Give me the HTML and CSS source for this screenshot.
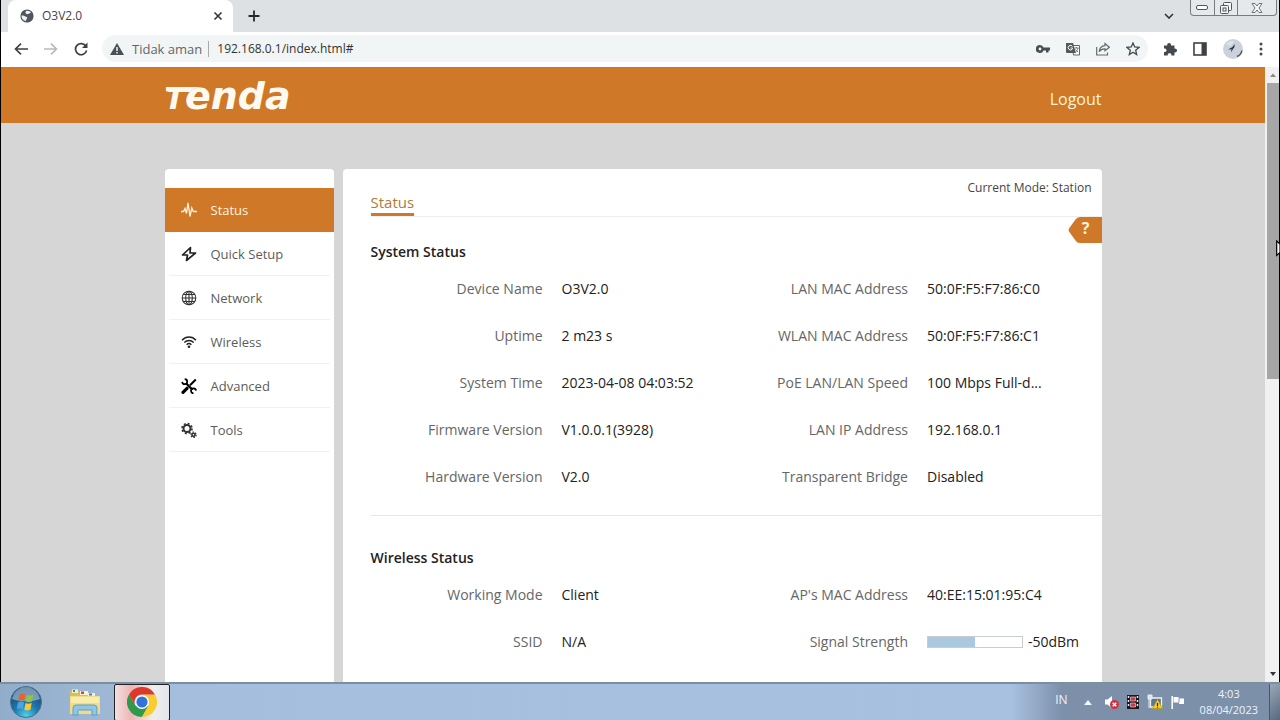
FILE: index.html
```
<!DOCTYPE html>
<html lang="en">
<head>
<meta charset="utf-8">
<title>O3V2.0</title>
<link rel="stylesheet" href="styles.css">
</head>
<body>
<div class="desktop">
  <div class="browser">
    <div class="tabstrip">
      <div class="tab">
        <svg class="tab-globe" viewBox="0 0 14 14" width="14" height="14"><circle cx="7" cy="7" r="6.6" fill="#50565c"/><path d="M1.500 6.500c2-.3 3 .6 4.500 1.200C7.800 8 7.500 9.500 6.500 10c-.4 1-.3 1.700-1 2C3 11.300 1.200 9 1.500 6.500zM6 2c2-.6 4 .3 5 1.500-.6.8-2 .6-2.600 1.600C7 5.500 5.600 4.800 5.500 3.600z" fill="#eef1f3"/></svg>
        <span class="tab-title">O3V2.0</span>
        <button class="icon-btn" aria-label="Close tab"><svg viewBox="0 0 10 10" width="10" height="10"><path d="M1.500 1.500l7 7m0-7l-7 7" stroke="#333" stroke-width="1.600"/></svg></button>
      </div>
      <button class="icon-btn new-tab" aria-label="New tab"><svg viewBox="0 0 12 12" width="12" height="12"><path d="M6 .5v11M.5 6h11" stroke="#26282b" stroke-width="1.800"/></svg></button>
      <button class="icon-btn tab-search" aria-label="Search tabs"><svg viewBox="0 0 10 6" width="10" height="6"><path d="M1 1l4 4 4-4" fill="none" stroke="#333" stroke-width="1.600"/></svg></button>
      <div class="window-buttons">
        <button class="min" aria-label="Minimize"><svg viewBox="0 0 12 5" width="12" height="5"><rect x=".5" y=".5" width="11" height="4" rx="1.500" fill="#fff" stroke="#555"/></svg></button>
        <button class="max" aria-label="Restore"><svg viewBox="0 0 12 12" width="12" height="12"><g fill="#f4f6f8" stroke="#50555a"><rect x="3.500" y=".5" width="8" height="8" rx="1"/><rect x=".5" y="3.500" width="8" height="8" rx="1"/><rect x="3" y="6" width="3" height="3"/></g></svg></button>
        <button class="close" aria-label="Close"><svg viewBox="0 0 12 10" width="12" height="10"><path d="M1 .5h3l2 2.500 2-2.500h3L8 5l3 4.500H8L6 7 4 9.500H1L4 5z" fill="#f4f6f8" stroke="#666" stroke-width=".9"/></svg></button>
      </div>
    </div>

    <div class="toolbar">
      <div class="nav-buttons">
        <button class="icon-btn" aria-label="Back"><svg viewBox="0 0 14 12" width="14" height="12"><path d="M14 6H1.500M7 .7L1.500 6 7 11.300" fill="none" stroke="#3c4043" stroke-width="1.600"/></svg></button>
        <button class="icon-btn" aria-label="Forward"><svg viewBox="0 0 14 12" width="14" height="12"><path d="M0 6h12.500M7 .7L12.500 6 7 11.300" fill="none" stroke="#b6b9bc" stroke-width="1.600"/></svg></button>
        <button class="icon-btn" aria-label="Reload"><svg viewBox="0 0 14 14" width="14" height="14"><path d="M12 4.300A5.600 5.600 0 1 0 12.600 8.500" fill="none" stroke="#3c4043" stroke-width="1.700"/><path d="M13.500 .5v5.500H8z" fill="#3c4043"/></svg></button>
      </div>
      <div class="omnibox">
        <svg viewBox="0 0 14 12" width="14" height="12"><path d="M7 0l7 12H0z" fill="#4b4f53"/><path d="M7 4v4M7 9v1.500" stroke="#fff" stroke-width="1.400"/></svg>
        <span class="insecure">Tidak aman</span>
        <input class="address" aria-label="Address" value="192.168.0.1/index.html#">
        <button class="icon-btn" aria-label="Passwords"><svg viewBox="0 0 14 10" width="14" height="10"><path fill-rule="evenodd" d="M4 1a4 4 0 1 0 3.500 5.500H10v2h2.500v-2H14V3.500H7.500A4 4 0 0 0 4 1zm0 2.600a1.400 1.400 0 1 1 0 2.800 1.400 1.400 0 0 1 0-2.800z" fill="#494d51"/></svg></button>
        <button class="icon-btn" aria-label="Translate"><svg viewBox="0 0 14 14" width="14" height="14"><path d="M6 3.500h7.500v9.500H7.500z" fill="#fff" stroke="#666"/><path d="M0 1h7l3 10H1a1 1 0 0 1-1-1z" fill="#55595d"/><path d="M6.500 4.500A2.300 2.300 0 1 0 6.500 6.800V6H4.500" fill="none" stroke="#fff" stroke-width="1"/><path d="M8.500 6h4M10.500 5v1M12 6c-.3 2-1.500 3-2.500 4M9.500 7.500l2.500 2.500" fill="none" stroke="#777"/></svg></button>
        <button class="icon-btn" aria-label="Share"><svg viewBox="0 0 14 14" width="14" height="14"><path d="M.7 5v8h10.800v-2.500" fill="none" stroke="#676b6f" stroke-width="1.200"/><path d="M9 1.500l4.300 3.700L9 8.800V6.800C6.500 6.700 4.500 7.600 3.200 9.800 3.500 6 5.700 3.900 9 3.600z" fill="none" stroke="#676b6f" stroke-width="1.200"/></svg></button>
        <button class="icon-btn" aria-label="Bookmark"><svg viewBox="0 0 14 14" width="14" height="14"><path d="M7 1l1.700 4 4.300.4-3.300 2.900 1 4.300L7 10.300l-3.700 2.300 1-4.300L1 5.400 5.300 5z" fill="none" stroke="#44484c" stroke-width="1.300"/></svg></button>
      </div>
      <div class="tool-icons">
        <button class="icon-btn" aria-label="Extensions"><svg viewBox="0 0 14 14" width="14" height="14"><path d="M1 3.500h3.300a1.900 1.900 0 1 1 3.600 0H11.500v3.200a1.900 1.900 0 1 1 0 3.600V13.500H8.300a1.800 1.800 0 1 0-3.500 0H1v-3.600a1.800 1.800 0 1 0 0-3.300z" fill="#45494d"/></svg></button>
        <button class="icon-btn" aria-label="Side panel"><svg viewBox="0 0 14 14" width="14" height="14"><rect x="1" y="1" width="12" height="12" fill="#fff" stroke="#3e4246" stroke-width="1.600"/><path d="M8.500 1H13v12H8.500z" fill="#3e4246"/></svg></button>
        <button class="icon-btn" aria-label="Profile"><svg viewBox="0 0 20 20" width="20" height="20"><circle cx="10" cy="10" r="10" fill="#ccd1dd"/><path d="M3 5a9 9 0 0 1 8-3l-3 5z" fill="#dfe3ea"/><path d="M11.500 5L9.500 8 5 10.500l3.500-.2L8 13.500l2-3.500 1.500-2z" fill="#2c3245"/><path d="M14 17.500c3-1.300 4.500-3.500 4.800-6" fill="none" stroke="#50566a" stroke-width="1.400"/></svg></button>
        <button class="icon-btn" aria-label="Menu"><svg viewBox="0 0 4 14" width="4" height="14"><g fill="#45494d"><circle cx="2" cy="2" r="1.500"/><circle cx="2" cy="7" r="1.500"/><circle cx="2" cy="12" r="1.500"/></g></svg></button>
      </div>
    </div>

    <div class="viewport">
      <div class="page">
        <header class="site-header">
          <div class="container header-row">
            <div class="logo"><span class="logo-cap">T</span>enda<svg class="logo-bar" viewBox="0 0 36 5" width="36" height="5"><path d="M1 0H36Q28 1 25 5H4Q0 4 1 0z" fill="#fffaf0"/></svg></div>
            <a class="logout" href="#">Logout</a>
          </div>
        </header>
        <div class="container layout">
          <nav class="sidebar">
            <a class="nav-item active" href="#"><svg viewBox="0 0 16 16" width="16" height="16"><path d="M0 9.500h2.500L4 6.500l1.500 5L7 .8l2 13.700L10.800 6l1.500 3.500H16" fill="none" stroke="#fff1dc" stroke-width="1.300"/></svg>Status</a>
            <a class="nav-item" href="#"><svg viewBox="0 0 16 16" width="16" height="16"><path d="M9.500 1.500L1.500 9h5l-1 5.500L14.500 7H9z" fill="none" stroke="#222" stroke-width="1.700" stroke-linejoin="round"/></svg>Quick Setup</a>
            <a class="nav-item" href="#"><svg viewBox="0 0 16 16" width="16" height="16"><g fill="none" stroke="#333" stroke-width="1.100"><circle cx="8" cy="8" r="6.800"/><ellipse cx="8" cy="8" rx="3.300" ry="6.800"/><path d="M8 1v14M1 8h14M2.200 4.500h11.600M2.200 11.500h11.600"/></g></svg>Network</a>
            <a class="nav-item" href="#"><svg viewBox="0 0 16 16" width="16" height="16"><g fill="none" stroke="#222" stroke-width="1.400"><path d="M1 6.200C5 2 11 2 15 6.200M3.300 8.500c2.700-2.700 6.700-2.700 9.400 0M5.600 10.700c1.500-1.400 3.300-1.400 4.800 0"/></g><circle cx="8" cy="12.700" r="1.300" fill="#222"/></svg>Wireless</a>
            <a class="nav-item" href="#"><svg viewBox="0 0 16 16" width="16" height="16"><g fill="none" stroke="#000"><path d="M14.800 1.500L9 7.300" stroke-width="2"/><path d="M6 10.300L2 14.300" stroke-width="3.200" stroke-linecap="round"/><path d="M5 5.300l6.500 6.500" stroke-width="2.300"/><path d="M3.700 1.200A2.500 2.500 0 1 1 1.200 3.900M12.500 15.300A2.500 2.500 0 1 1 15 12.600" stroke-width="1.700"/></g></svg>Advanced</a>
            <a class="nav-item" href="#"><svg viewBox="0 0 16 16" width="16" height="16"><g fill="none" stroke="#333"><circle cx="6" cy="6.500" r="3.500" stroke-width="2"/><circle cx="6" cy="6.500" r="5" stroke-width="1.600" stroke-dasharray="2 1.930"/><circle cx="12.500" cy="12.800" r="1.600" stroke-width="1.600"/><circle cx="12.500" cy="12.800" r="2.700" stroke-width="1.200" stroke-dasharray="1.400 1.430"/></g></svg>Tools</a>
          </nav>
          <main class="panel">
            <div class="panel-head">
              <h1 class="panel-tab">Status</h1>
              <div class="mode">Current Mode: Station</div>
              <button class="help" aria-label="Help"><svg class="help-shape" viewBox="0 0 34 26" width="34" height="26"><path d="M34 0H12Q9 0 7.500 2.500L1 11.500Q0 13 1 14.500L7.500 23.500Q9 26 12 26H34z" fill="#ce7828"/></svg><span class="help-mark">?</span></button>
            </div>
            <section class="group">
              <h2>System Status</h2>
              <div class="columns">
                <dl>
                  <div><dt>Device Name</dt><dd>O3V2.0</dd></div>
                  <div><dt>Uptime</dt><dd>2 m23 s</dd></div>
                  <div><dt>System Time</dt><dd>2023-04-08 04:03:52</dd></div>
                  <div><dt>Firmware Version</dt><dd>V1.0.0.1(3928)</dd></div>
                  <div><dt>Hardware Version</dt><dd>V2.0</dd></div>
                </dl>
                <dl>
                  <div><dt>LAN MAC Address</dt><dd>50:0F:F5:F7:86:C0</dd></div>
                  <div><dt>WLAN MAC Address</dt><dd>50:0F:F5:F7:86:C1</dd></div>
                  <div><dt>PoE LAN/LAN Speed</dt><dd>100 Mbps Full-d...</dd></div>
                  <div><dt>LAN IP Address</dt><dd>192.168.0.1</dd></div>
                  <div><dt>Transparent Bridge</dt><dd>Disabled</dd></div>
                </dl>
              </div>
            </section>
            <section class="group">
              <h2>Wireless Status</h2>
              <div class="columns">
                <dl>
                  <div><dt>Working Mode</dt><dd>Client</dd></div>
                  <div><dt>SSID</dt><dd>N/A</dd></div>
                </dl>
                <dl>
                  <div><dt>AP's MAC Address</dt><dd>40:EE:15:01:95:C4</dd></div>
                  <div><dt>Signal Strength</dt><dd class="signal"><span class="bar"><span class="fill" style="width:50%"></span></span>-50dBm</dd></div>
                </dl>
              </div>
            </section>
          </main>
        </div>
      </div>
      <div class="scrollbar">
        <svg viewBox="0 0 12 16" width="12" height="16"><path d="M3 10l3-3.500L9 10z" fill="#888"/></svg>
        <div class="thumb"></div>
        <div class="track"></div>
        <svg viewBox="0 0 12 16" width="12" height="16"><path d="M3 6l3 4 3-4z" fill="#333"/></svg>
      </div>
    </div>
    <svg class="cursor" viewBox="0 0 4 18" width="4" height="18"><path d="M.7 1v14.500L4 12.500V4z" fill="#fff" stroke="#000" stroke-width="1.200"/></svg>
  </div>

  <div class="taskbar">
    <button class="task start" aria-label="Start"><svg viewBox="0 0 34 34" width="34" height="34"><defs><radialGradient id="orb" cx=".5" cy=".95" r=".9"><stop offset="0" stop-color="#4fd2ef"/><stop offset=".45" stop-color="#1e78ac"/><stop offset="1" stop-color="#1d4267"/></radialGradient></defs><circle cx="17" cy="17" r="15.500" fill="url(#orb)" stroke="#48718f"/><path d="M3 14C5 5 12 2 17 2s12 3 14 12c-8 3-20 3-28 0z" fill="#bcd5e3" opacity=".55"/><path d="M10.500 9.500c2-1.300 4.200-1.300 6-.3l-1.200 6.600c-2-1-4-.9-6.100.3z" fill="#e9632b"/><path d="M18 10c2 1 4 .9 6.300-.3L23 16.300c-2 1.200-4.200 1.300-6.200.3z" fill="#9ac33c"/><path d="M9 17.500c2-1.200 4-1.200 6-.2L13.800 24c-2-1-4-.9-6 .2z" fill="#4aa5e0"/><path d="M16.500 18c2 1 4.100.9 6.200-.3l-1.200 6.700c-2 1.200-4.200 1.300-6.200.3z" fill="#fac735"/></svg></button>
    <button class="task" aria-label="Windows Explorer"><svg viewBox="0 0 32 28" width="32" height="28"><path d="M1 3h8l2 3h5l2-1h5l2 3h5v18H1z" fill="#d9bd62"/><path d="M3 1.500h6V5H3z" fill="#f4efc9"/><path d="M4 2h2v2H4z" fill="#3d9a4a"/><path d="M11 3h8v4h-8z" fill="#f7f2dc"/><path d="M12 3.500h3v2.500h-3z" fill="#d64534"/><path d="M19 5h7v4h-7z" fill="#f4efd9"/><path d="M20 5.500h3v2h-3z" fill="#3983b8"/><path d="M1 8h30v18H1z" fill="#f0dc86"/><path d="M2 9h28v6H2z" fill="#f8edaa"/><path d="M4 27V20q0-3 3-3h18q3 0 3 3v7h-5v-5H9v5z" fill="#8ec6e8" stroke="#5e9fc9"/></svg></button>
    <button class="task current" aria-label="Google Chrome"><svg viewBox="0 0 30 30" width="30" height="30"><path d="M15 15l-6.500 3.800L2 7.500A15 15 0 0 0 15 30l6.500-11.200z" fill="#2f9a4b"/><path d="M15 15V7.500h13A15 15 0 0 1 15 30l6.500-11.200z" fill="#f9cc31"/><path d="M2 7.500A15 15 0 0 1 28 7.500H15a7.500 7.500 0 0 0-6.500 11.300z" fill="#d93a2b"/><circle cx="15" cy="15" r="7" fill="#fff"/><circle cx="15" cy="15" r="5.600" fill="#2e73de"/></svg></button>
    <div class="tray">
      <span class="lang">IN</span>
      <svg class="tray-more" viewBox="0 0 8 5" width="8" height="5"><path d="M0 5l4-5 4 5z" fill="#f2f7fb"/></svg>
      <svg viewBox="0 0 14 14" width="14" height="14"><path d="M0 4.500h2.500L7 1v12L2.500 9.500H0z" fill="#fff"/><circle cx="9.500" cy="9.500" r="4.500" fill="#cc3340"/><path d="M7.700 7.700l3.600 3.600m0-3.600l-3.600 3.600" stroke="#fff" stroke-width="1.500"/></svg>
      <svg viewBox="0 0 12 14" width="12" height="14"><path d="M0 0h12v14H0z" fill="#17181c"/><path d="M1.500 1v12M10.500 1v12" stroke="#e7e7e7" stroke-width="1.500" stroke-dasharray="2 2"/><path d="M3.500 2h5v4h-5zM3.500 8h5v4h-5z" fill="#c43c4e" stroke="#f1c4cb" stroke-width=".7"/></svg>
      <svg viewBox="0 0 16 16" width="16" height="16"><path d="M3.500 4h11v9h-11z" fill="#62758d" stroke="#edf1f4" stroke-width="1.300"/><path d="M1 1h4v4H1zM2 5v9" fill="#dce5ed" stroke="#e8eef4"/><path d="M10.500 5.500l5 9h-10z" fill="#f4d320" stroke="#b89509" stroke-width=".7"/><path d="M10.500 9v3M10.500 12.800v1" stroke="#222" stroke-width="1.200"/></svg>
      <svg viewBox="0 0 14 14" width="14" height="14"><path d="M1.200 1v13" stroke="#fff" stroke-width="1.600"/><path d="M2.500 2h5v1.500H13v5.500H8V7.500H2.500z" fill="#fff"/><path d="M8 3.500v4" stroke="#8193a8"/></svg>
      <div class="clock"><span>4:03</span><span>08/04/2023</span></div>
      <button class="show-desktop" aria-label="Show desktop"></button>
    </div>
  </div>
</div>
</body>
</html>
```
FILE: styles.css
```
* { box-sizing: border-box; }
body {
  margin: 0;
  font-family: "Open Sans", "Noto Sans", sans-serif;
  font-size: 14px;
  line-height: 20px;
  color: #222;
}
button { font: inherit; border: 0; padding: 0; background: none; }
a { color: inherit; text-decoration: none; }
svg { display: block; flex: none; }
h1, h2, dl, dd { margin: 0; }

.desktop { display: flex; flex-direction: column; height: 100vh; overflow: hidden; }
.browser {
  position: relative;
  flex: 1;
  min-height: 0;
  display: flex;
  flex-direction: column;
  border: solid #000;
  border-width: 0 1px;
}
.icon-btn { display: flex; align-items: center; justify-content: center; flex: none; }

.tabstrip { display: flex; height: 32px; background: #dde1e4; flex: none; }
.tab {
  display: flex;
  align-items: center;
  width: 225px;
  margin-left: 7px;
  padding: 0 10px 0 12px;
  border-radius: 8px 8px 0 0;
  background: #fff;
  font-size: 12px;
}
.tab-title { flex: 1; margin-left: 8px; color: #444; }
.new-tab { margin-left: 15px; }
.tab-search { margin-left: auto; }
.window-buttons {
  display: flex;
  width: 87px;
  height: 16px;
  margin-left: 16px;
  margin-right: 2px;
  border: 1px solid #777c80;
  border-top: 0;
  border-radius: 0 0 4px 4px;
  background: #e6e9eb;
}
.window-buttons button { display: flex; align-items: center; justify-content: center; flex: 3; }
.window-buttons .max { border: solid #777c80; border-width: 0 1px; }
.window-buttons .close { flex: 5; }

.toolbar {
  display: flex;
  align-items: center;
  height: 35px;
  flex: none;
  padding: 0 16px 2px 13px;
  background: #fff;
}
.nav-buttons { display: flex; gap: 16px; }
.omnibox {
  display: flex;
  align-items: center;
  flex: 1;
  height: 27px;
  margin: 0 15px 0 14px;
  padding: 0 8px;
  gap: 16px;
  border-radius: 14px;
  background: #f2f5f6;
}
.insecure {
  margin-left: -8px;
  padding-right: 6px;
  border-right: 1px solid #aaa;
  font-size: 13px;
  line-height: 16px;
  color: #666;
}
.address {
  flex: 1;
  min-width: 0;
  margin-left: -8px;
  padding: 0;
  border: 0;
  background: none;
  font: inherit;
  font-size: 12px;
  color: #333;
}
.tool-icons { display: flex; align-items: center; gap: 16px; }

.viewport { display: flex; flex: 1; min-height: 0; background: #d6d6d6; }
.page { flex: 1; min-width: 0; overflow: hidden; display: flex; flex-direction: column; }
.container { width: 100%; max-width: 937px; margin: 0 auto; }
.site-header { background: #ce7828; flex: none; }
.header-row { display: flex; align-items: center; justify-content: space-between; height: 56px; }
.logo {
  position: relative;
  padding-top: 4px;
  color: #fffaf0;
  font: italic bold 38px/52px "DejaVu Sans", sans-serif;
}
.logo-cap { font-size: 30px; }
.logo-bar { position: absolute; top: 21px; left: 0; }
.logout { font-size: 16px; line-height: 24px; padding-top: 8px; color: #fff3dc; }

.layout { display: flex; flex: 1; gap: 9px; padding-top: 46px; }
.sidebar { width: 169px; padding-top: 19px; border-radius: 4px 4px 0 0; background: #fff; }
.nav-item {
  display: flex;
  align-items: center;
  gap: 14px;
  height: 44px;
  margin: 0 4px;
  padding-left: 12px;
  border-bottom: 1px solid #f1f1f1;
  font-size: 13px;
  color: #5c5c5c;
}
.nav-item.active { margin: 0; padding-left: 16px; border: 0; background: #ce7828; color: #fff3e0; }

.panel { flex: 1; min-width: 0; padding-left: 28px; border-radius: 4px 4px 0 0; background: #fff; }
.panel-head {
  position: relative;
  display: flex;
  justify-content: space-between;
  height: 48px;
  border-bottom: 1px solid #eee;
}
.panel-tab {
  align-self: flex-end;
  border-bottom: 3px solid #ce7828;
  font-size: 15px;
  line-height: 22px;
  font-weight: 400;
  color: #b07a3c;
}
.mode { padding: 9px 10px 0 0; font-size: 12px; color: #444; }
.help { position: absolute; top: 48px; right: 0; width: 34px; height: 26px; }
.help-mark {
  position: absolute;
  inset: 0;
  padding-left: 2px;
  color: #fff3dc;
  font-size: 16px;
  font-weight: 700;
  line-height: 22px;
}
.group { padding: 25px 0 15px; }
.group + .group { padding-top: 32px; border-top: 1px solid #e6e6e6; }
.group h2 { margin-bottom: 3px; font-size: 14px; font-weight: 600; line-height: 20px; }
.columns { display: grid; grid-template-columns: 1fr 1fr; }
.columns dl > div { display: flex; align-items: center; gap: 19px; height: 47px; white-space: nowrap; }
dt { width: 172px; text-align: right; color: #666; }
.signal { display: flex; align-items: center; gap: 5px; }
.bar { width: 96px; height: 12px; border: 1px solid #c8cdd1; background: #fff; }
.fill { display: block; height: 100%; background: #aac8de; }

.scrollbar { display: flex; flex-direction: column; width: 14px; padding-left: 2px; background: #f1f1f1; }
.thumb { flex: 296; background: #a6a6a6; }
.track { flex: 288; }
.cursor { position: absolute; right: -1px; top: 240px; }

.taskbar {
  display: flex;
  align-items: center;
  height: 38px;
  flex: none;
  padding-left: 9px;
  border-top: 2px solid #7c8ea2;
  background: linear-gradient(90deg, #92adc9 0, #a5bedd 14%, #a8c1e1 79%, #7d90aa 83%, #7d90aa 100%);
}
.task { display: flex; align-items: center; justify-content: center; }
.start { margin-right: 26px; }
.task.current {
  width: 56px;
  height: 37px;
  margin-left: 13px;
  border: 1px solid #222;
  border-radius: 2px;
  background: linear-gradient(90deg, #f3dfe2, #eeb5b5 30%, #eee 70%, #e3e5ea);
}
.tray { display: flex; align-items: center; gap: 8px; height: 100%; margin-left: auto; color: #eef3f8; font-size: 12px; }
.lang { margin-right: 8px; padding-bottom: 4px; }
.tray-more { margin-right: 5px; }
.clock { display: flex; flex-direction: column; align-items: center; margin: 0 3px 0 7px; font-size: 11px; line-height: 16px; }
.show-desktop { width: 11px; height: 100%; border-left: 1px solid #48586c; background: linear-gradient(135deg, #9aa8b8, #58687e); }
```
